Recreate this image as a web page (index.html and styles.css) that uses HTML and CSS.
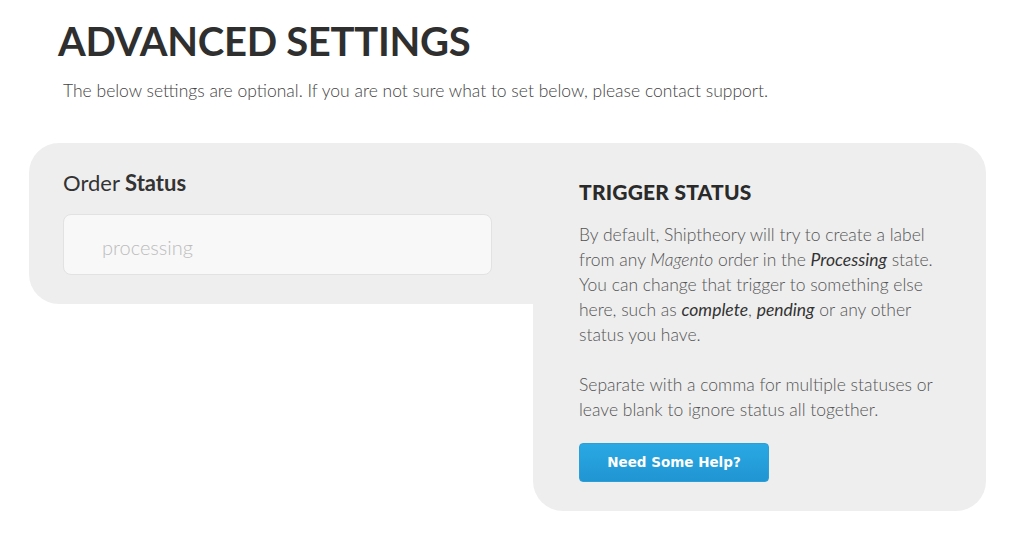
FILE: index.html
```html
<!DOCTYPE html>
<html>
<head>
<meta charset="utf-8">
<link rel="stylesheet" href="styles.css">
</head>
<body>
<div class="page">
  <h1 class="title">ADVANCED SETTINGS</h1>
  <p class="intro">The below settings are optional. If you are not sure what to set below, please contact support.</p>
  <div class="settings">
    <div class="field-panel">
      <label class="field-label">Order <b>Status</b></label>
      <div class="input">processing</div>
    </div>
    <div class="help-panel">
      <h2 class="help-title">TRIGGER STATUS</h2>
      <p class="help-text">By default, Shiptheory will try to create a label from any <i>Magento</i> order in the <em>Processing</em> state. You can change that trigger to something else here, such as <em>complete</em>, <em>pending</em> or any other status you have.</p>
      <p class="help-text">Separate with a comma for multiple statuses or leave blank to ignore status all together.</p>
      <a class="help-btn">Need Some Help?</a>
    </div>
  </div>
</div>
</body>
</html>
```
FILE: styles.css
```css
html, body { margin: 0; padding: 0; background: #fff; }
body { font-family: "Lato", "Open Sans", sans-serif; color: #333; }
.page { padding: 18px 0 0 0; }
.title {
  margin: 0 0 0 58px;
  font-size: 40px;
  font-weight: 700;
  letter-spacing: -0.3px;
  line-height: 46px;
  color: #2f2f2f;
}
.intro {
  margin: 16px 0 0 63px;
  font-size: 17.5px;
  font-weight: 300;
  color: #444;
  line-height: 22px;
}
.settings {
  display: flex;
  align-items: flex-start;
  margin: 41px 0 0 29px;
}
.field-panel {
  width: 504px;
  height: 161px;
  box-sizing: border-box;
  background: #eeeeee;
  border-radius: 30px 0 0 30px;
  padding: 27px 41px 0 34px;
}
.field-label {
  display: block;
  font-size: 22px;
  font-weight: 400;
  color: #333;
  line-height: 26px;
}
.field-label b { font-weight: 700; }
.input {
  margin-top: 18px;
  height: 61px;
  box-sizing: border-box;
  border: 1px solid #e2e2e2;
  border-radius: 8px;
  background: #f8f8f8;
  padding: 6px 0 0 38px;
  font-size: 20px;
  font-weight: 300;
  color: #bcbcbc;
  line-height: 53px;
}
.help-panel {
  width: 453px;
  height: 368px;
  box-sizing: border-box;
  background: #eeeeee;
  border-radius: 0 30px 30px 30px;
  padding: 36px 40px 0 46px;
}
.help-title {
  margin: 0;
  font-size: 21px;
  font-weight: 900;
  line-height: 26px;
  color: #2a2a2a;
  letter-spacing: 0.2px;
}
.help-text {
  width: 365px;
  margin: 17px 0 0 0;
  font-size: 17.5px;
  font-weight: 300;
  line-height: 25px;
  color: #555;
}
.help-text + .help-text { margin-top: 25px; }
.help-text em { font-style: italic; font-weight: 400; color: #333; }
.help-text i { font-style: italic; }
.help-btn {
  display: block;
  width: 190px;
  height: 39px;
  margin-top: 21px;
  box-sizing: border-box;
  border-radius: 4px;
  background: linear-gradient(#2aa9e4, #2095d2);
  border: 1px solid #2a9fd8;
  color: #fff;
  font-family: "DejaVu Sans", Verdana, sans-serif;
  font-weight: 700;
  font-size: 13.5px;
  text-align: center;
  line-height: 37px;
  cursor: pointer;
}
```
